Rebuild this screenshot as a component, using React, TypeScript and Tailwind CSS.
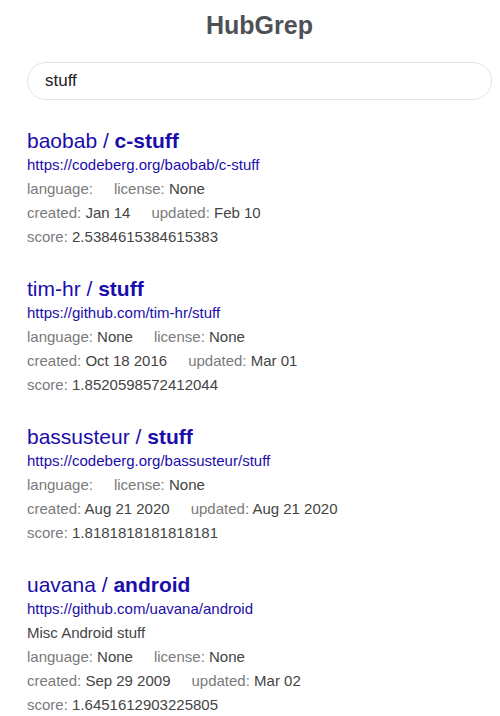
import React from 'react';

interface Result {
  owner: string;
  name: string;
  url: string;
  description?: string;
  language: string;
  license: string;
  created: string;
  updated: string;
  score: string;
}

const results: Result[] = [
  {
    owner: 'baobab',
    name: 'c-stuff',
    url: 'https://codeberg.org/baobab/c-stuff',
    language: '',
    license: 'None',
    created: 'Jan 14',
    updated: 'Feb 10',
    score: '2.5384615384615383',
  },
  {
    owner: 'tim-hr',
    name: 'stuff',
    url: 'https://github.com/tim-hr/stuff',
    language: 'None',
    license: 'None',
    created: 'Oct 18 2016',
    updated: 'Mar 01',
    score: '1.8520598572412044',
  },
  {
    owner: 'bassusteur',
    name: 'stuff',
    url: 'https://codeberg.org/bassusteur/stuff',
    language: '',
    license: 'None',
    created: 'Aug 21 2020',
    updated: 'Aug 21 2020',
    score: '1.8181818181818181',
  },
  {
    owner: 'uavana',
    name: 'android',
    url: 'https://github.com/uavana/android',
    description: 'Misc Android stuff',
    language: 'None',
    license: 'None',
    created: 'Sep 29 2009',
    updated: 'Mar 02',
    score: '1.6451612903225805',
  },
];

const Field: React.FC<{ label: string; value: string; last?: boolean }> = ({ label, value, last }) => (
  <span className={last ? '' : 'mr-[21px]'}>
    <span className="text-[#7a7a7a]">{label}:{value ? ' ' : ''}</span>
    <span className="text-[#444]">{value}</span>
  </span>
);

const ResultItem: React.FC<{ result: Result }> = ({ result }) => (
  <div className="mt-[28px] text-[15px] leading-[24px]">
    <a href={result.url} className="block text-[21px] leading-[24px] text-[#1a0dab]">
      {result.owner} / <b className="font-bold">{result.name}</b>
    </a>
    <a href={result.url} className="block text-[#1a0dab]">
      {result.url}
    </a>
    {result.description && <div className="text-[#444]">{result.description}</div>}
    <div className="whitespace-pre">
      <Field label="language" value={result.language} />
      <Field label="license" value={result.license} last />
    </div>
    <div className="whitespace-pre">
      <Field label="created" value={result.created} />
      <Field label="updated" value={result.updated} last />
    </div>
    <div>
      <Field label="score" value={result.score} last />
    </div>
  </div>
);

export default function App() {
  return (
    <div className="min-h-[716px] bg-white pl-[27px] pr-[8px] pt-[10px] font-['Liberation_Sans',Arial,sans-serif]">
      <h1 className="text-center text-[25px] leading-[30px] font-bold text-[#4d5156]">HubGrep</h1>
      <div className="mt-[22px] flex h-[38px] items-center rounded-full border border-[#e3e4e8] pl-[17px]">
        <input
          defaultValue="stuff"
          className="w-full bg-transparent text-[17px] text-[#202124] outline-none"
        />
      </div>
      <div className="pt-[1px] pb-4">
        {results.map((r, i) => (
          <ResultItem key={i} result={r} />
        ))}
      </div>
    </div>
  );
}
